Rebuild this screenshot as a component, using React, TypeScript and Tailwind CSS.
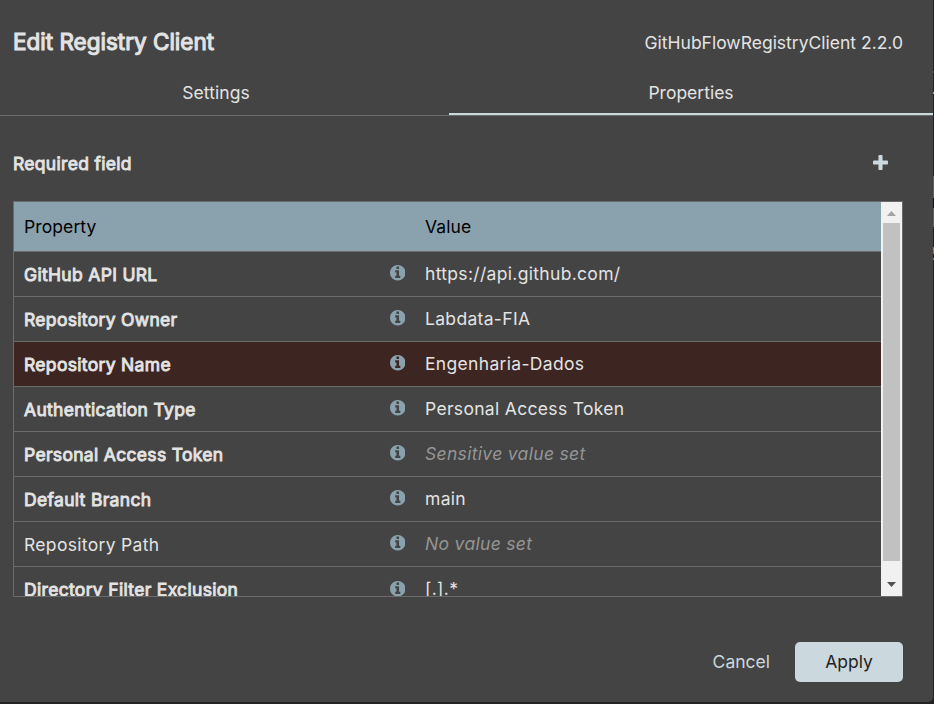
import React from 'react';

type Row = { name: string; value: string; required?: boolean; muted?: boolean; active?: boolean };

const rows: Row[] = [
  { name: 'GitHub API URL', value: 'https://api.github.com/', required: true },
  { name: 'Repository Owner', value: 'Labdata-FIA', required: true },
  { name: 'Repository Name', value: 'Engenharia-Dados', required: true, active: true },
  { name: 'Authentication Type', value: 'Personal Access Token', required: true },
  { name: 'Personal Access Token', value: 'Sensitive value set', required: true, muted: true },
  { name: 'Default Branch', value: 'main', required: true },
  { name: 'Repository Path', value: 'No value set', muted: true },
  { name: 'Directory Filter Exclusion', value: '[.].*', required: true },
];

function InfoIcon() {
  return (
    <svg viewBox="0 128 1536 1536" className="h-[15.5px] w-[15.5px] shrink-0 fill-[#8aa2ae]">
      <path d="M1024 1376v-160q0-14-9-23t-23-9h-96v-512q0-14-9-23t-23-9h-320q-14 0-23 9t-9 23v160q0 14 9 23t23 9h96v320h-96q-14 0-23 9t-9 23v160q0 14 9 23t23 9h448q14 0 23-9t9-23zm-128-896v-160q0-14-9-23t-23-9h-192q-14 0-23 9t-9 23v160q0 14 9 23t23 9h192q14 0 23-9t9-23zm640 416q0 209-103 385.5t-279.5 279.5-385.5 103-385.5-103-279.5-279.5-103-385.5 103-385.5 279.5-279.5 385.5-103 385.5 103 279.5 279.5 103 385.5z" />
    </svg>
  );
}

function PlusIcon() {
  return (
    <svg viewBox="0 192 1408 1408" className="h-[15px] w-[15px] fill-[#cbd8de]">
      <path d="M1408 800v192q0 40-28 68t-68 28h-416v416q0 40-28 68t-68 28h-192q-40 0-68-28t-28-68v-416h-416q-40 0-68-28t-28-68v-192q0-40 28-68t68-28h416v-416q0-40 28-68t68-28h192q40 0 68 28t28 68v416h416q40 0 68 28t28 68z" />
    </svg>
  );
}

function Scrollbar() {
  return (
    <div className="flex w-[21px] shrink-0 flex-col items-center bg-[#f1f1f1]">
      <div className="flex h-[21px] w-full items-center justify-center pt-px">
        <svg viewBox="0 0 9 5" className="h-[5px] w-[9px] fill-[#a3a3a3]"><path d="M4.5 0L9 5H0z" /></svg>
      </div>
      <div className="h-[338px] w-[17px] bg-[#c1c1c1]" />
      <div className="flex w-full flex-1 items-center justify-center pt-3">
        <svg viewBox="0 0 9 5" className="mb-px h-[5px] w-[9px] fill-[#505050]"><path d="M0 0H9L4.5 5z" /></svg>
      </div>
    </div>
  );
}

function PropertyTable() {
  return (
    <div className="flex h-[396px] w-[890px] overflow-hidden border border-[#6b6b6b]">
      <div className="flex min-w-0 flex-1 flex-col">
        <div className="flex h-[50px] shrink-0 items-center border-b border-[#6b6b6b] bg-[#8aa2ae] pl-[10px] tracking-[0.1px] text-black">
          <div className="w-[401px]">Property</div>
          <div>Value</div>
        </div>
        {rows.map((r) => (
          <div
            key={r.name}
            className={`group flex h-[45px] shrink-0 items-center border-b border-[#6b6b6b] pb-[2px] pl-[10px] ${r.active ? 'bg-[#3d2521]' : ''}`}
          >
            <div className="flex w-[401px] items-center justify-between pr-[20px]">
              <span className={`pt-[3px] tracking-[0.32px] ${r.required ? '[-webkit-text-stroke:0.9px_#e3e3e3]' : ''}`}>{r.name}</span>
              <div className="group-last:pt-[2px]"><InfoIcon /></div>
            </div>
            <div className={`tracking-[0.32px] ${r.muted ? 'italic text-[#959595]' : ''}`}>{r.value}</div>
          </div>
        ))}
      </div>
      <Scrollbar />
    </div>
  );
}

/* Sliver of the page that stays visible beside the dialog. */
function BackdropEdge() {
  return (
    <div className="flex w-px flex-col bg-[#222222]">
      <div className="mt-[71px] h-[2px] bg-[#2b4a86]" />
      <div className="mt-[19px] h-[2px] bg-[#a0a0a0]" />
      <div className="mt-[82px] h-[22px] bg-[#596064]" />
      <div className="h-[10px] bg-[#00102c]" />
      <div className="h-[19px] bg-[#596064]" />
      <div className="mt-[20px] h-[3px] bg-[#8a8a8a]" />
      <div className="h-[4px] bg-[#9a7b3a]" />
      <div className="mt-[4px] h-[2px] bg-[#8a8a8a]" />
    </div>
  );
}

export default function App() {
  return (
    <div className="flex h-[704px] w-[934px] overflow-hidden bg-[#222222] font-['Inter',sans-serif] text-[17.5px] leading-[25px] text-[#e3e3e3]">
      <div className="flex h-[702px] w-[933px] flex-col rounded-br-[5px] bg-[#444444]">
        <header className="flex h-[71px] items-center justify-between pr-[30px] pl-[13px] pt-[14px]">
          <h2 className="pb-px text-[22.5px] leading-[30px] [-webkit-text-stroke:1.1px_#e3e3e3]">Edit Registry Client</h2>
          <span>GitHubFlowRegistryClient 2.2.0</span>
        </header>
        <nav className="flex h-[45px] border-b border-[#6b6b6b]">
          <div className="flex w-[449px] justify-center pt-[9px] pr-[17px] tracking-[0.05px]">Settings</div>
          <div className="flex flex-1 justify-center border-b-2 border-[#cbd8de] pt-[9px]">Properties</div>
        </nav>
        <section className="flex flex-col pl-[13px] pt-[32px]">
          <div className="flex h-[53px] w-[875px] items-start justify-between">
            <span className="pt-[3px] tracking-[0.31px] [-webkit-text-stroke:0.9px_#e3e3e3]">Required field</span>
            <div className="pt-[7px]"><PlusIcon /></div>
          </div>
          <PropertyTable />
        </section>
        <footer className="flex items-center justify-end gap-[25px] pt-[45px] pr-[30px]">
          <button className="pb-[2px] text-[#cbd8de]">Cancel</button>
          <button className="h-10 w-[108px] rounded-[5px] bg-[#cbd8de] pb-[2px] text-[#222]">Apply</button>
        </footer>
      </div>
      <BackdropEdge />
    </div>
  );
}
